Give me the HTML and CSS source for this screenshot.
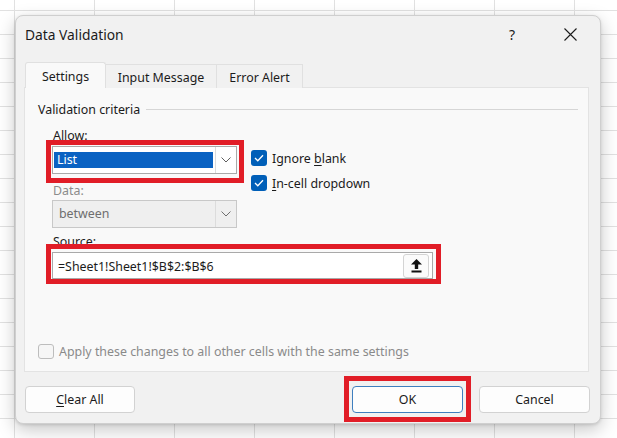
FILE: index.html
```html
<!DOCTYPE html>
<html lang="en">
<head>
  <meta charset="UTF-8" />
  <title>Data Validation</title>
  <link rel="stylesheet" href="styles.css">
</head>
<body>

  <div class="dialog">
    <div class="titlebar">
      <span class="title">Data Validation</span>
      <span class="help">?</span>
      <span class="close">
        <svg width="13" height="13" viewBox="0 0 13 13"><path d="M0.5 0.5 L12.5 12.5 M12.5 0.5 L0.5 12.5" stroke="#1b1b1b" stroke-width="1.1" fill="none"/></svg>
      </span>
    </div>

    <div class="tabs">
      <div class="tab active">Settings</div>
      <div class="tab">Input Message</div>
      <div class="tab">Error Alert</div>
    </div>

    <div class="panel">
      <div class="legend"><span>Validation criteria</span></div>

      <div class="criteria">
        <label class="field-label">Allow:</label>
        <div class="combo marked mark-allow">
          <span class="value selected">List</span>
          <span class="arrow">
            <svg width="10" height="6" viewBox="0 0 10 6"><path d="M0.5 0.5 L5 5 L9.5 0.5" stroke="#5f5f5f" fill="none"/></svg>
          </span>
        </div>

        <div class="checks">
          <div class="check"><span class="box on"><svg width="10" height="8" viewBox="0 0 10 8"><path d="M1 4 L3.8 6.8 L9 1.2" stroke="#fff" stroke-width="1.3" fill="none"/></svg></span><span>Ignore <u>b</u>lank</span></div>
          <div class="check"><span class="box on"><svg width="10" height="8" viewBox="0 0 10 8"><path d="M1 4 L3.8 6.8 L9 1.2" stroke="#fff" stroke-width="1.3" fill="none"/></svg></span><span><u>I</u>n-cell dropdown</span></div>
        </div>

        <label class="field-label disabled">Data:</label>
        <div class="combo disabled">
          <span class="value">between</span>
          <span class="arrow">
            <svg width="10" height="6" viewBox="0 0 10 6"><path d="M0.5 0.5 L5 5 L9.5 0.5" stroke="#6f6f6f" fill="none"/></svg>
          </span>
        </div>
      </div>

      <div class="source">
        <label class="field-label">Source:</label>
        <div class="source-input marked mark-source">
          <span class="value">=Sheet1!Sheet1!$B$2:$B$6</span>
          <span class="pick">
            <svg width="11" height="14" viewBox="0 0 11 14"><path d="M5.5 0 L11 5.5 H7.2 V10 H3.8 V5.5 H0 Z" fill="#111"/><rect x="0.5" y="11.5" width="10" height="2" fill="#111"/></svg>
          </span>
        </div>
      </div>

      <div class="apply"><span class="box off"></span><span>Apply these changes to all other cells with the same settings</span></div>
    </div>

    <div class="buttons">
      <button class="btn"><u>C</u>lear All</button>
      <button class="btn default marked mark-ok">OK</button>
      <button class="btn">Cancel</button>
    </div>
  </div>

</body>
</html>
```

FILE: styles.css
```css
body {
  margin: 0;
  height: 438px;
  padding: 15px 0 0 15px;
  box-sizing: border-box;
  font-family: "Noto Sans", "Open Sans", sans-serif;
  font-size: 12.4px;
  color: #1b1b1b;
  background-color: #fff;
  background-image:
    linear-gradient(to right, #e1e1e1 1px, transparent 1px),
    linear-gradient(to bottom, #e1e1e1 1px, transparent 1px);
  background-size: 80px 24px;
  background-position: 14px 10px;
  overflow: hidden;
}

u {
  text-decoration-thickness: 1px;
  text-underline-offset: 2px;
}

.dialog {
  width: 586px;
  height: 409px;
  box-sizing: border-box;
  padding: 0 11px 0 8px;
  background: #f1f1f1;
  border: 1px solid #cfcfcf;
  border-radius: 8px;
  box-shadow: 0 6px 18px rgba(0,0,0,0.22), 0 1px 3px rgba(0,0,0,0.12);
  display: flex;
  flex-direction: column;
}

/* title row */
.titlebar {
  height: 36px;
  display: flex;
  align-items: center;
  padding-left: 1px;
  margin-right: -4px;
}

.title {
  flex: 1;
  font-size: 13.8px;
}

.help {
  width: 40px;
  text-align: center;
  font-size: 14px;
}

.close {
  width: 46px;
  margin-left: 15px;
  display: flex;
  justify-content: center;
}

/* tabs */
.tabs {
  margin-top: 10px;
  height: 26px;
  display: flex;
  align-items: flex-end;
  margin-bottom: -1px;
  padding-left: 1px;
  position: relative;
  z-index: 1;
}

.tab {
  height: 24px;
  box-sizing: border-box;
  padding-top: 1px;
  display: flex;
  align-items: center;
  justify-content: center;
  white-space: nowrap;
  border: 1px solid #e0e0e0;
  border-bottom: none;
  background: #f1f1f1;
}

.tab + .tab {
  border-left: none;
}

.tab.active {
  height: 26px;
  width: 81px;
  background: #f9f9f9;
  border-radius: 3px 3px 0 0;
}

.tab:nth-child(2) {
  width: 111px;
}

.tab:nth-child(3) {
  width: 86px;
}

/* settings page */
.panel {
  height: 285px;
  box-sizing: border-box;
  background: #f9f9f9;
  border: 1px solid #e3e3e3;
  display: flex;
  flex-direction: column;
}

.legend {
  height: 18px;
  margin: 12px 10px 0 13px;
  display: flex;
  align-items: center;
  gap: 6px;
}

.legend::after {
  content: "";
  flex: 1;
  border-top: 1px solid #d6d6d6;
}

.criteria {
  margin: 9px 0 0 27px;
  display: grid;
  grid-template-columns: 185px auto;
  column-gap: 14px;
  align-items: start;
}

.field-label {
  display: block;
  grid-column: 1;
  line-height: 14px;
  padding: 2px 0 0 1px;
}

.field-label.disabled {
  color: #8c8c8c;
  margin-top: 8px;
}

.combo {
  grid-column: 1;
  height: 28px;
  box-sizing: border-box;
  border: 1px solid #a9a9a9;
  background: #fff;
  display: flex;
  margin-top: 3px;
}

.combo .value {
  flex: 1;
  height: 16px;
  line-height: 16px;
  margin: 5px 2px 5px 1px;
  padding-left: 3px;
}

.combo .value.selected {
  background: #0a62c2;
  color: #fff;
}

.combo .arrow {
  width: 20px;
  border-left: 1px solid #dcdcdc;
  display: flex;
  align-items: center;
  justify-content: center;
}

.combo.disabled {
  background: #efefef;
  border-color: #c8c8c8;
  color: #6e6e6e;
  margin-top: 2px;
}

.combo.disabled .value {
  padding-left: 5px;
}

.checks {
  grid-column: 2;
  grid-row: 2 / span 2;
  margin-top: 7px;
  display: flex;
  flex-direction: column;
  gap: 9px;
}

.check, .apply {
  display: flex;
  align-items: center;
  height: 16px;
  gap: 5px;
}

.box {
  width: 16px;
  height: 16px;
  box-sizing: border-box;
  border-radius: 3px;
  display: flex;
  align-items: center;
  justify-content: center;
}

.box.on {
  background: #005fb8;
}

.box.off {
  border: 1px solid #bdbdbd;
  background: #f6f6f6;
  height: 15px;
}

.source {
  margin: 5px 0 0 27px;
}

.source-input {
  width: 381px;
  height: 27px;
  box-sizing: border-box;
  margin-top: 3px;
  border: 1px solid #a9a9a9;
  background: #fff;
  display: flex;
  align-items: center;
}

.source-input .value {
  flex: 1;
  padding: 1px 0 0 5px;
}

.pick {
  width: 26px;
  height: 24px;
  box-sizing: border-box;
  margin-right: 3px;
  border: 1px solid #d4d4d4;
  border-radius: 3px;
  background: #fbfbfb;
  display: flex;
  align-items: center;
  justify-content: center;
}

.apply {
  margin: auto 0 12px 13px;
  color: #8a8a8a;
}

/* bottom buttons */
.buttons {
  margin-top: 14px;
  padding-left: 1px;
  margin-right: -1px;
  display: flex;
  gap: 16px;
}

.btn {
  width: 111px;
  height: 27px;
  font-family: inherit;
  font-size: 12.4px;
  color: #1b1b1b;
  background: #fdfdfd;
  border: 1px solid #d2d2d2;
  border-radius: 4px;
  padding: 0;
}

.btn:first-child {
  width: 110px;
  margin-right: auto;
}

.btn.default {
  border-color: #3f7fbf;
}

/* red callout frames drawn over the controls */
.marked {
  position: relative;
}

.marked::after {
  content: "";
  position: absolute;
  border: 5px solid #e11d27;
  pointer-events: none;
}

.mark-allow::after {
  top: -7px;
  right: -8px;
  bottom: -10px;
  left: -7px;
}

.mark-source::after {
  top: -9px;
  right: -9px;
  bottom: -6px;
  left: -7px;
}

.mark-ok::after {
  top: -11px;
  right: -9px;
  bottom: -10px;
  left: -9px;
}
```
